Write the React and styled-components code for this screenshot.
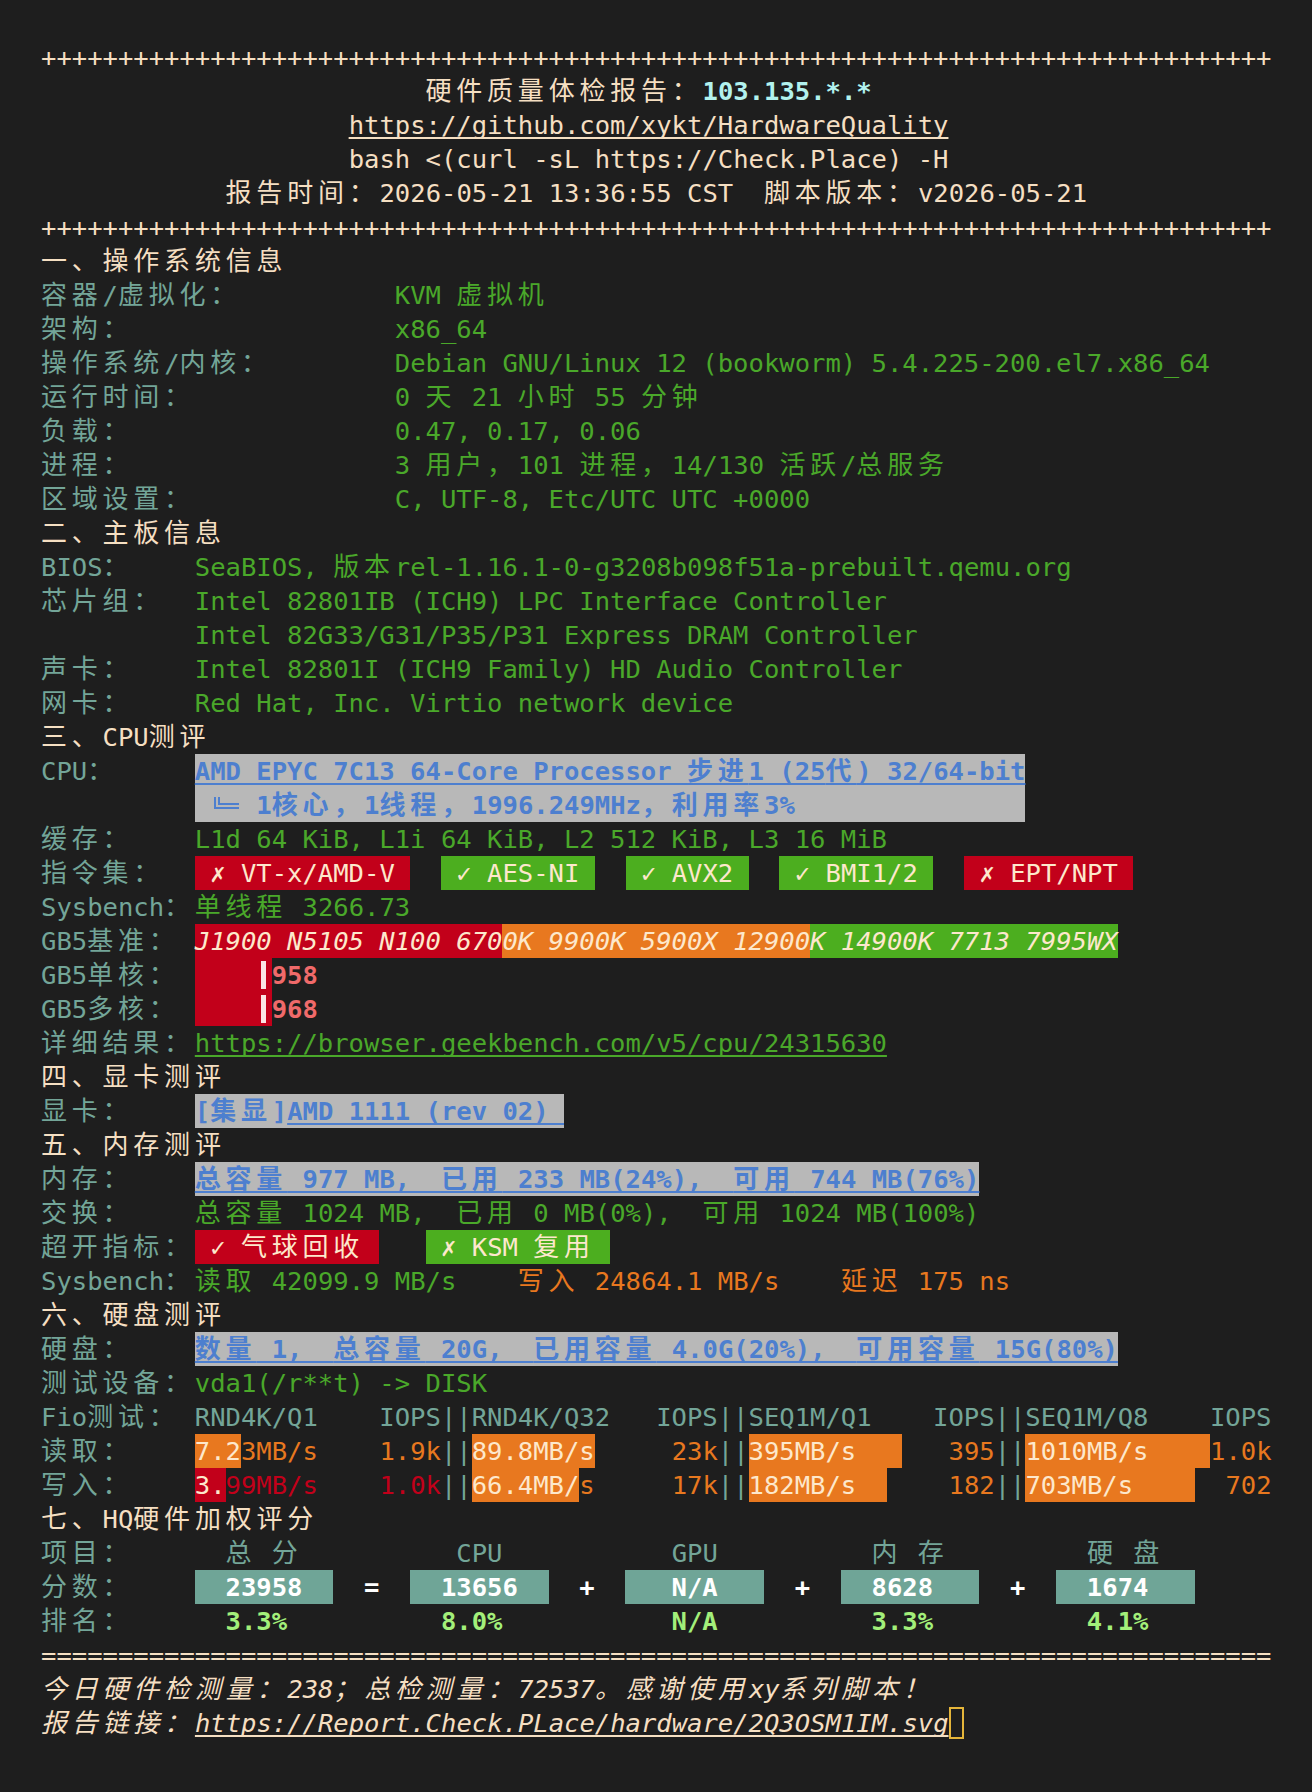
import React from 'react';
import styled, { createGlobalStyle } from 'styled-components';

const C = {
  bg: '#1e1e1e',
  fg: '#f5dfc2',
  label: '#73a598',
  green: '#4aa82a',
  greenBg: '#4cae1f',
  red: '#c2001a',
  orange: '#e8781f',
  hlBg: '#b8b8b8',
  blue: '#4d7fcf',
  cyan: '#b2f2ee',
  score: '#6fa597',
  rank: '#a3ef7a',
  pink: '#f06a6a',
  onFill: '#fde8cc',
  cursor: '#e5b53a',
};

const GlobalStyle = createGlobalStyle`
  html, body {
    margin: 0;
    background: ${C.bg};
  }
  body {
    min-height: 1792px;
  }
`;

// terminal grid: 80 columns of 15.39px, 34px rows
const Screen = styled.div`
  display: flex;
  flex-direction: column;
  padding: 40px 0 0 41px;
  font-family: 'DejaVu Sans Mono', monospace;
  font-size: 25.56px;
  color: ${C.fg};
`;

const Line = styled.div`
  height: 34px;
  line-height: 34px;
  white-space: pre;
  font-style: ${(p) => (p.$italic ? 'italic' : 'normal')};
`;

// CJK glyphs take two columns
const Han = styled.span`
  font-family: 'Noto Sans CJK SC', sans-serif;
  font-size: 26px;
  line-height: 1;
  letter-spacing: 4.78px;
`;

const Label = styled.span`
  display: inline-block;
  width: ${(p) => p.$w || 10}ch;
  color: ${C.label};
`;

const Tx = styled.span`
  color: ${(p) => p.$c || 'inherit'};
  font-weight: ${(p) => (p.$b ? 700 : 'inherit')};
  text-decoration: ${(p) => (p.$u ? 'underline' : 'none')};
  text-decoration-skip-ink: none;
  text-underline-offset: 3px;
`;

const Fill = styled.span`
  display: inline-block;
  height: 34px;
  vertical-align: top;
  background: ${(p) => p.$bg};
  color: ${C.onFill};
  font-style: ${(p) => (p.$i ? 'italic' : 'inherit')};
`;

const Glyph = styled.span`
  display: inline-block;
  width: 1ch;
  text-align: center;
  font-weight: 700;
`;

const Hl = styled.span`
  display: inline-block;
  height: 34px;
  vertical-align: top;
  width: ${(p) => (p.$w ? `${p.$w}ch` : 'auto')};
  background: ${C.hlBg};
  color: ${C.blue};
  font-weight: 700;
  text-decoration: ${(p) => (p.$u ? 'underline' : 'none')};
  text-decoration-skip-ink: none;
  text-underline-offset: 3px;
`;

// the double-line corner that opens the CPU detail row
const Corner = styled.span`
  display: inline-flex;
  align-items: flex-start;
  box-sizing: border-box;
  width: 2ch;
  height: 34px;
  padding: 9px 0 0 4px;
  vertical-align: top;
`;

const CornerStroke = styled.span`
  box-sizing: border-box;
  width: 25px;
  height: 12px;
  border-left: 6px double currentColor;
  border-bottom: 6px double currentColor;
`;

const Meter = styled.span`
  display: inline-flex;
  justify-content: flex-end;
  align-items: center;
  box-sizing: border-box;
  width: 5ch;
  height: 34px;
  padding-right: 6px;
  vertical-align: top;
  background: ${C.red};
`;

const Mark = styled.span`
  width: 5px;
  height: 28px;
  background: #fbe4e4;
`;

const ScoreBox = styled.span`
  display: inline-block;
  width: 9ch;
  height: 34px;
  vertical-align: top;
  background: ${C.score};
  color: #ffffff;
  font-weight: 700;
`;

const Cursor = styled.span`
  display: inline-block;
  box-sizing: border-box;
  width: 1ch;
  height: 32px;
  margin-top: 1px;
  vertical-align: top;
  border: 2px solid ${C.cursor};
`;

const WIDE = /([\u2e80-\u9fff\u3000-\u303f\uff00-\uff60\uffe0-\uffe6]+)/;

const wrap = (node) => {
  if (typeof node === 'string') {
    const parts = node.split(WIDE);
    if (parts.length === 1) return node;
    return parts.map((s, i) => (i % 2 ? <Han key={i}>{s}</Han> : s));
  }
  if (Array.isArray(node)) {
    return node.map((n, i) => <React.Fragment key={i}>{wrap(n)}</React.Fragment>);
  }
  if (React.isValidElement(node) && node.props.children !== undefined) {
    return React.cloneElement(node, {}, wrap(node.props.children));
  }
  return node;
};

const Term = ({ children }) => <Screen>{wrap(children)}</Screen>;

const sp = (n) => ' '.repeat(n);

const Sep = () => <Tx $c={C.label}>||</Tx>;

const FioCell = ({ text, bar, iops, barBg = C.orange, tone = C.orange }) => {
  const body = text.padEnd(16 - iops.length);
  return (
    <>
      <Fill $bg={barBg}>{body.slice(0, bar)}</Fill>
      <Tx $c={tone}>{body.slice(bar)}{iops}</Tx>
    </>
  );
};

const Badge = ({ ok, bg, children }) => (
  <Fill $bg={bg}>
    {' '}<Glyph>{ok ? '✓' : '✗'}</Glyph>{' '}{children}{' '}
  </Fill>
);

const Op = ({ children }) => <Tx $c="#ffffff" $b>{`  ${children}  `}</Tx>;

const scoreHead = ['  总 分  ', '   CPU   ', '   GPU   ', '  内 存  ', '  硬 盘  '].join(sp(5));
const scoreRank = ['  3.3%   ', '  8.0%   ', '   N/A   ', '  3.3%   ', '  4.1%   '].join(sp(5));

export default function App() {
  return (
    <>
      <GlobalStyle />
      <Term>
        <Line>{'+'.repeat(80)}</Line>
        <Line>{sp(25)}硬件质量体检报告：<Tx $c={C.cyan} $b>103.135.*.*</Tx></Line>
        <Line>{sp(20)}<Tx $u>https://github.com/xykt/HardwareQuality</Tx></Line>
        <Line>{sp(20)}bash {'<'}(curl -sL https://Check.Place) -H</Line>
        <Line>{sp(12)}报告时间：2026-05-21 13:36:55 CST  脚本版本：v2026-05-21</Line>
        <Line>{'+'.repeat(80)}</Line>

        <Line>一、操作系统信息</Line>
        <Line><Label $w={23}>容器/虚拟化：</Label><Tx $c={C.green}>KVM 虚拟机</Tx></Line>
        <Line><Label $w={23}>架构：</Label><Tx $c={C.green}>x86_64</Tx></Line>
        <Line><Label $w={23}>操作系统/内核：</Label><Tx $c={C.green}>Debian GNU/Linux 12 (bookworm) 5.4.225-200.el7.x86_64</Tx></Line>
        <Line><Label $w={23}>运行时间：</Label><Tx $c={C.green}>0 天 21 小时 55 分钟</Tx></Line>
        <Line><Label $w={23}>负载：</Label><Tx $c={C.green}>0.47, 0.17, 0.06</Tx></Line>
        <Line><Label $w={23}>进程：</Label><Tx $c={C.green}>3 用户，101 进程，14/130 活跃/总服务</Tx></Line>
        <Line><Label $w={23}>区域设置：</Label><Tx $c={C.green}>C, UTF-8, Etc/UTC UTC +0000</Tx></Line>

        <Line>二、主板信息</Line>
        <Line><Label>BIOS：</Label><Tx $c={C.green}>SeaBIOS, 版本rel-1.16.1-0-g3208b098f51a-prebuilt.qemu.org</Tx></Line>
        <Line><Label>芯片组：</Label><Tx $c={C.green}>Intel 82801IB (ICH9) LPC Interface Controller</Tx></Line>
        <Line><Label></Label><Tx $c={C.green}>Intel 82G33/G31/P35/P31 Express DRAM Controller</Tx></Line>
        <Line><Label>声卡：</Label><Tx $c={C.green}>Intel 82801I (ICH9 Family) HD Audio Controller</Tx></Line>
        <Line><Label>网卡：</Label><Tx $c={C.green}>Red Hat, Inc. Virtio network device</Tx></Line>

        <Line>三、CPU测评</Line>
        <Line><Label>CPU：</Label><Hl $w={54} $u>AMD EPYC 7C13 64-Core Processor 步进1 (25代) 32/64-bit</Hl></Line>
        <Line><Label></Label><Hl $w={54}> <Corner><CornerStroke /></Corner> 1核心，1线程，1996.249MHz，利用率3%</Hl></Line>
        <Line><Label>缓存：</Label><Tx $c={C.green}>L1d 64 KiB, L1i 64 KiB, L2 512 KiB, L3 16 MiB</Tx></Line>
        <Line>
          <Label>指令集：</Label>
          <Badge bg={C.red}>VT-x/AMD-V</Badge>{sp(2)}
          <Badge ok bg={C.greenBg}>AES-NI</Badge>{sp(2)}
          <Badge ok bg={C.greenBg}>AVX2</Badge>{sp(2)}
          <Badge ok bg={C.greenBg}>BMI1/2</Badge>{sp(2)}
          <Badge bg={C.red}>EPT/NPT</Badge>
        </Line>
        <Line><Label>Sysbench：</Label><Tx $c={C.green}>单线程 3266.73</Tx></Line>
        <Line>
          <Label>GB5基准：</Label>
          <Fill $bg={C.red} $i>J1900 N5105 N100 670</Fill>
          <Fill $bg={C.orange} $i>0K 9900K 5900X 12900</Fill>
          <Fill $bg={C.greenBg} $i>K 14900K 7713 7995WX</Fill>
        </Line>
        <Line><Label>GB5单核：</Label><Meter><Mark /></Meter><Tx $c={C.pink} $b>958</Tx></Line>
        <Line><Label>GB5多核：</Label><Meter><Mark /></Meter><Tx $c={C.pink} $b>968</Tx></Line>
        <Line><Label>详细结果：</Label><Tx $c={C.green} $u>https://browser.geekbench.com/v5/cpu/24315630</Tx></Line>

        <Line>四、显卡测评</Line>
        <Line><Label>显卡：</Label><Hl>[集显]<Tx $u>AMD 1111 (rev 02) </Tx></Hl></Line>

        <Line>五、内存测评</Line>
        <Line><Label>内存：</Label><Hl $u>总容量 977 MB,  已用 233 MB(24%),  可用 744 MB(76%)</Hl></Line>
        <Line><Label>交换：</Label><Tx $c={C.green}>总容量 1024 MB,  已用 0 MB(0%),  可用 1024 MB(100%)</Tx></Line>
        <Line>
          <Label>超开指标：</Label>
          <Badge ok bg={C.red}>气球回收</Badge>{sp(3)}
          <Badge bg={C.greenBg}>KSM 复用</Badge>
        </Line>
        <Line>
          <Label>Sysbench：</Label>
          <Tx $c={C.green}>读取 42099.9 MB/s</Tx>{sp(4)}
          <Tx $c={C.orange}>写入 24864.1 MB/s</Tx>{sp(4)}
          <Tx $c={C.orange}>延迟 175 ns</Tx>
        </Line>

        <Line>六、硬盘测评</Line>
        <Line><Label>硬盘：</Label><Hl $u>数量 1,  总容量 20G,  已用容量 4.0G(20%),  可用容量 15G(80%)</Hl></Line>
        <Line><Label>测试设备：</Label><Tx $c={C.green}>vda1(/r**t) -{'>'} DISK</Tx></Line>
        <Line>
          <Label>Fio测试：</Label>
          <Tx $c={C.label}>RND4K/Q1    IOPS||RND4K/Q32   IOPS||SEQ1M/Q1    IOPS||SEQ1M/Q8    IOPS</Tx>
        </Line>
        <Line>
          <Label>读取：</Label>
          <FioCell text="7.23MB/s" bar={3} iops="1.9k" /><Sep />
          <FioCell text="89.8MB/s" bar={8} iops="23k" /><Sep />
          <FioCell text="395MB/s" bar={10} iops="395" /><Sep />
          <FioCell text="1010MB/s" bar={12} iops="1.0k" />
        </Line>
        <Line>
          <Label>写入：</Label>
          <FioCell text="3.99MB/s" bar={2} iops="1.0k" barBg={C.red} tone={C.red} /><Sep />
          <FioCell text="66.4MB/s" bar={7} iops="17k" /><Sep />
          <FioCell text="182MB/s" bar={9} iops="182" /><Sep />
          <FioCell text="703MB/s" bar={11} iops="702" />
        </Line>

        <Line>七、HQ硬件加权评分</Line>
        <Line><Label>项目：</Label><Tx $c={C.label}>{scoreHead}</Tx></Line>
        <Line>
          <Label>分数：</Label>
          <ScoreBox>  23958  </ScoreBox><Op>=</Op>
          <ScoreBox>  13656  </ScoreBox><Op>+</Op>
          <ScoreBox>   N/A   </ScoreBox><Op>+</Op>
          <ScoreBox>  8628   </ScoreBox><Op>+</Op>
          <ScoreBox>  1674   </ScoreBox>
        </Line>
        <Line><Label>排名：</Label><Tx $c={C.rank} $b>{scoreRank}</Tx></Line>
        <Line>{'='.repeat(80)}</Line>
        <Line $italic>今日硬件检测量：238；总检测量：72537。感谢使用xy系列脚本！</Line>
        <Line $italic>报告链接：<Tx $u>https://Report.Check.PLace/hardware/2Q3OSM1IM.svg</Tx><Cursor /></Line>
      </Term>
    </>
  );
}
